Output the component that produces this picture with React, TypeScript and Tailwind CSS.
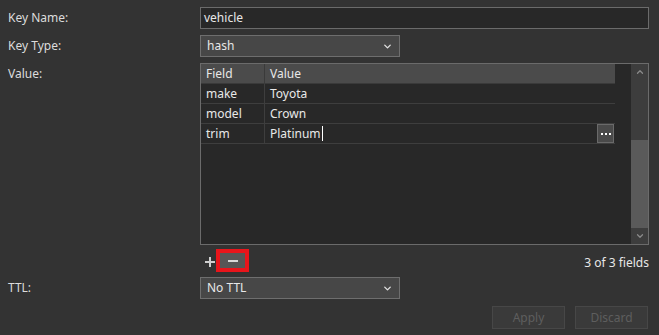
import { ChevronDown, ChevronUp } from 'lucide-react';

const rows = [
  { field: 'make', value: 'Toyota' },
  { field: 'model', value: 'Crown' },
  { field: 'trim', value: 'Platinum', editing: true },
];

function Select({ value }: { value: string }) {
  return (
    <div className="w-[200px] h-[22px] bg-[#474747] border border-[#6e6e6e] flex items-center justify-between pl-[6px] pr-[6px] text-[#e8e8e8]">
      <span>{value}</span>
      <ChevronDown size={11} strokeWidth={3} className="text-[#e0e0e0]" />
    </div>
  );
}

export default function App() {
  return (
    <div
      className="w-[659px] h-[335px] bg-[#333333] text-[12px] text-[#dcdcdc] pl-[8px] pr-[10px] pt-[7px] overflow-hidden"
      style={{ fontFamily: '"Noto Sans", "Open Sans", sans-serif' }}
    >
      <div className="flex h-[22px] items-center">
        <div className="w-[192px]">Key Name:</div>
        <div className="flex-1 h-[22px] bg-[#282828] border border-[#6b6b6b] flex items-center pl-[3px] text-[#e8e8e8]">
          vehicle
        </div>
      </div>

      <div className="flex h-[22px] items-center mt-[6px]">
        <div className="w-[192px]">Key Type:</div>
        <Select value="hash" />
      </div>

      <div className="flex mt-[6px]">
        <div className="w-[192px] pt-[2px]">Value:</div>
        <div className="flex-1 h-[182px] border border-[#6b6b6b] bg-[#282828] flex">
          <div className="w-[414px] flex flex-col">
            <div className="flex h-[20px] bg-[#4b4b4b] border-b border-[#3a3a3a] text-[#e8e8e8]">
              <div className="w-[64px] pl-[5px] flex items-center border-r border-[#3a3a3a]">Field</div>
              <div className="flex-1 pl-[5px] flex items-center">Value</div>
            </div>
            {rows.map((r) => (
              <div key={r.field} className="flex h-[20px] border-b border-[#3e3e3e] text-[#e8e8e8]">
                <div className="w-[64px] pl-[5px] flex items-center border-r border-[#3e3e3e]">{r.field}</div>
                <div className="flex-1 pl-[5px] flex items-center justify-between">
                  <span className="flex items-center">
                    {r.value}
                    {r.editing && <span className="inline-block w-px h-[15px] bg-white ml-px" />}
                  </span>
                  {r.editing && (
                    <div className="w-[17px] h-[19px] bg-[#4a4a4a] border border-[#6a6a6a] flex items-center justify-center gap-[2px] mr-px">
                      <span className="w-[2px] h-[2px] bg-white" />
                      <span className="w-[2px] h-[2px] bg-white" />
                      <span className="w-[2px] h-[2px] bg-white" />
                    </div>
                  )}
                </div>
              </div>
            ))}
          </div>
          <div className="w-[16px]" />
          <div className="w-[17px] bg-[#3d3d3d] flex flex-col">
            <div className="h-[16px] flex items-center justify-center">
              <ChevronUp size={10} strokeWidth={3} className="text-[#8a8a8a]" />
            </div>
            <div className="h-[60px]" />
            <div className="h-[88px] bg-[#5a5a5a]" />
            <div className="flex-1 flex items-center justify-center">
              <ChevronDown size={10} strokeWidth={3} className="text-[#8a8a8a]" />
            </div>
          </div>
        </div>
      </div>

      <div className="flex items-center h-[23px] mt-[4px] pl-[197px]">
        <span className="relative w-[10px] h-[10px] mr-[1px] mt-[2px]">
          <span className="absolute left-0 top-[4px] w-[10px] h-[2px] bg-[#cfcfcf]" />
          <span className="absolute left-[4px] top-0 w-[2px] h-[10px] bg-[#cfcfcf]" />
        </span>
        <div className="w-[33px] h-[23px] border-[4px] border-[#e8151b] bg-[#565656] flex items-center justify-center">
          <span className="w-[10px] h-[2px] bg-[#d8d8d8]" />
        </div>
        <span className="ml-auto text-[#e8e8e8] pt-[4px]">3 of 3 fields</span>
      </div>

      <div className="flex h-[22px] items-center mt-[5px]">
        <div className="w-[192px]">TTL:</div>
        <Select value="No TTL" />
      </div>

      <div className="flex justify-end gap-[10px] mt-[7px] pr-px">
        <button className="w-[73px] h-[23px] bg-[#3a3a3a] border border-[#474747] text-[#5e5e5e]">Apply</button>
        <button className="w-[73px] h-[23px] bg-[#3a3a3a] border border-[#474747] text-[#5e5e5e]">Discard</button>
      </div>
    </div>
  );
}
